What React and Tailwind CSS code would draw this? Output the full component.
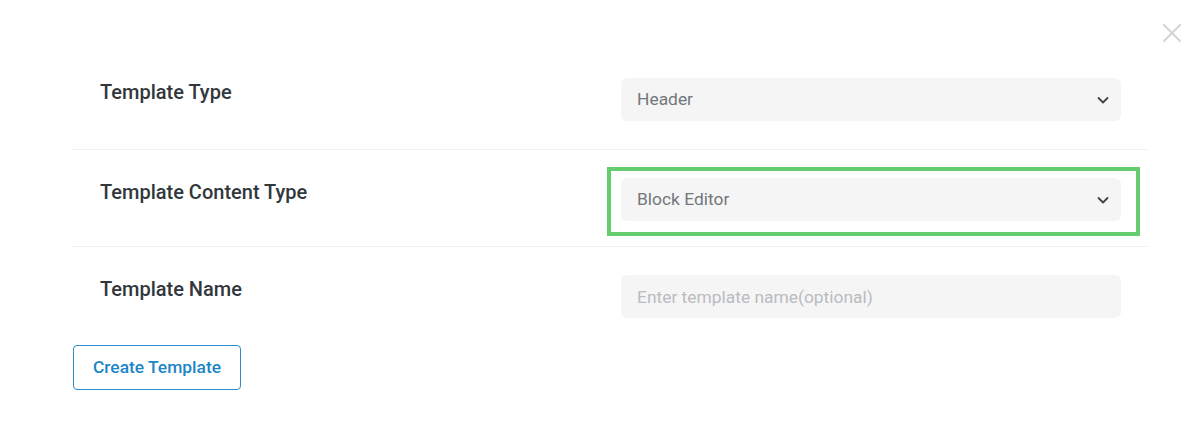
import React from "react";

function Chevron() {
  return (
    <svg width="16" height="16" viewBox="0 0 16 16" fill="none" className="text-[#3c434a]">
      <path d="M3.5 6l4.5 4.5L12.5 6" stroke="currentColor" strokeWidth="1.8" strokeLinecap="round" strokeLinejoin="round" />
    </svg>
  );
}

function SelectBox({ value }) {
  return (
    <div className="flex h-[43px] w-[500px] items-center justify-between rounded-md bg-[#f5f5f5] pl-4 pr-[10px] text-[17.4px] text-[#72777c]">
      <span>{value}</span>
      <Chevron />
    </div>
  );
}

export default function App() {
  return (
    <div className="relative h-[440px] w-[1200px] bg-white font-['Roboto',sans-serif]">
      <button className="absolute right-[18px] top-[23px] text-[#d4d4d4]">
        <svg width="20" height="20" viewBox="0 0 20 20" fill="none">
          <path d="M2 2l16 16M18 2L2 18" stroke="currentColor" strokeWidth="2" strokeLinecap="round" />
        </svg>
      </button>

      <div className="ml-[73px] w-[1075px] pt-[51px]">
        <div className="flex items-start justify-between border-b border-[#f0f0f0] pb-[28px] pl-[27px] pr-[27px] pt-[27px]">
          <p className="text-[20px] font-medium leading-7 text-[#32373c]">Template Type</p>
          <SelectBox value="Header" />
        </div>

        <div className="flex items-start justify-between border-b border-[#f0f0f0] pb-[25px] pl-[27px] pr-[27px] pt-[28px]">
          <p className="text-[20px] font-medium leading-7 text-[#32373c]">Template Content Type</p>
          <div className="relative">
            <SelectBox value="Block Editor" />
            <div className="pointer-events-none absolute -bottom-[15px] -left-[14px] -right-[19px] -top-[11px] border-4 border-[#66cd6f]" />
          </div>
        </div>

        <div className="flex items-start justify-between pb-[27px] pl-[27px] pr-[27px] pt-[28px]">
          <p className="text-[20px] font-medium leading-7 text-[#32373c]">Template Name</p>
          <input
            placeholder="Enter template name(optional)"
            className="h-[43px] w-[500px] rounded-md bg-[#f5f5f5] px-4 text-[17.4px] text-[#72777c] outline-none placeholder:text-[#b9bcc0]"
          />
        </div>

        <button className="h-[45px] w-[168px] rounded border border-[#2a8dcd] text-[17.4px] font-medium text-[#1a86c7]">
          Create Template
        </button>
      </div>
    </div>
  );
}
